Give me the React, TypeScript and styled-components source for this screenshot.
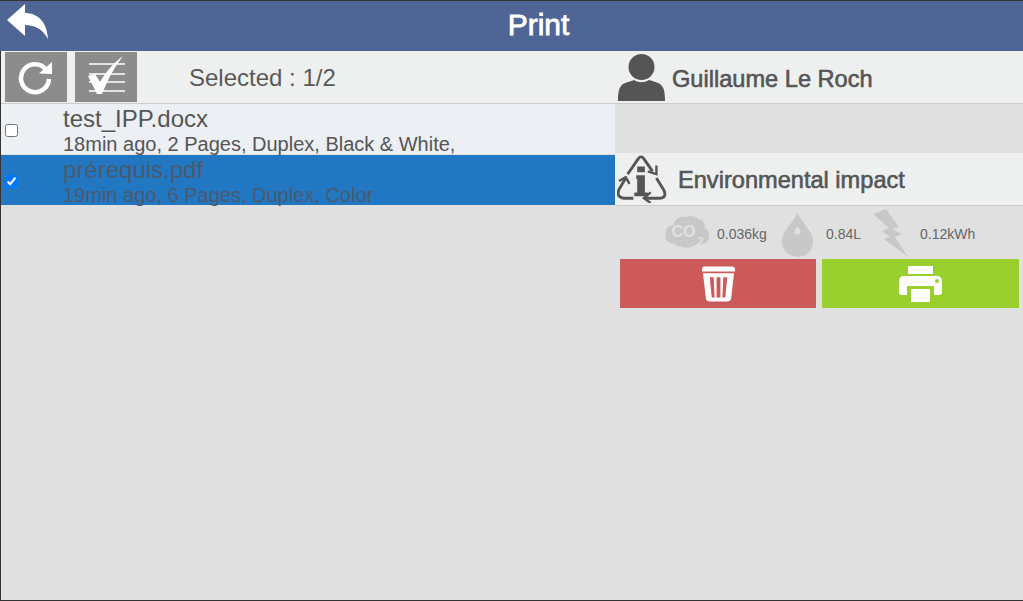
import React from "react";
import styled, { createGlobalStyle } from "styled-components";

const Global = createGlobalStyle`
  html, body { margin: 0; padding: 0; background: #e0e0e0; }
  body { font-family: "Liberation Sans", Arial, sans-serif; color: #555; }
`;

const Screen = styled.div`
  width: 1023px;
  height: 601px;
  box-sizing: border-box;
  display: flex;
  flex-direction: column;
  background: #e0e0e0;
  border-top: 1px solid #333;
  border-bottom: 1px solid #333;
  overflow: hidden;
`;

const Header = styled.header`
  height: 50px;
  flex: none;
  display: flex;
  align-items: center;
  justify-content: center;
  background: #4f6595;
  position: relative;
`;

const Title = styled.h1`
  margin: 0;
  font-size: 30px;
  font-weight: 400;
  color: #fff;
  -webkit-text-stroke: 0.8px #fff;
  position: relative;
  left: 27px;
  top: -1px;
`;

const BackButton = styled.button`
  position: absolute;
  left: 7px;
  top: 3px;
  width: 41px;
  height: 36px;
  padding: 0;
  border: 0;
  background: none;
`;

const Main = styled.main`
  flex: 1;
  display: grid;
  grid-template-columns: 614px 1fr;
  border-left: 1px solid #333;
  min-height: 0;
`;

const LeftColumn = styled.section`
  display: flex;
  flex-direction: column;
`;

const Toolbar = styled.div`
  height: 53px;
  box-sizing: border-box;
  display: flex;
  align-items: center;
  padding: 0 0 1px 4px;
  background: #eef0f0;
  border-bottom: 1px solid #ccc;
`;

const ToolButton = styled.button`
  width: 62px;
  height: 50px;
  padding: 0;
  border: 0;
  background: #8c8c8c;
  margin-right: 8px;
  display: flex;
  align-items: center;
  justify-content: center;
`;

const SelectedCount = styled.span`
  margin-left: 44px;
  font-size: 24px;
  color: #595959;
  position: relative;
  top: 1px;
`;

const Row = styled.div<{ $selected?: boolean }>`
  height: 50px;
  margin-bottom: 1px;
  flex: none;
  display: flex;
  align-items: center;
  background: ${(p) => (p.$selected ? "#2277c2" : "#eceff3")};
  color: ${(p) => (p.$selected ? "#4a5a6e" : "#555")};
`;

const Check = styled.input`
  width: 13px;
  height: 13px;
  margin: 2px 0 0 4px;
  flex: none;
`;

const RowText = styled.div`
  margin-left: 45px;
  padding-top: 2px;
  display: flex;
  flex-direction: column;
`;

const FileName = styled.div`
  font-size: 24px;
  line-height: 27px;
`;

const FileMeta = styled.div`
  font-size: 20px;
  line-height: 23px;
  margin-top: 1px;
`;

const RightColumn = styled.aside`
  display: flex;
  flex-direction: column;
`;

const InfoBar = styled.div<{ $gap: number; $pad: number }>`
  height: 53px;
  box-sizing: border-box;
  display: flex;
  align-items: center;
  padding-left: ${(p) => p.$pad}px;
  gap: ${(p) => p.$gap}px;
  background: #eef0f0;
  border-bottom: 1px solid #ccc;
  flex: none;
`;

const InfoLabel = styled.span<{ $top: number }>`
  font-size: 23.6px;
  font-weight: 400;
  color: #555;
  -webkit-text-stroke: 0.6px #555;
  position: relative;
  top: ${(p) => p.$top}px;
`;

const Spacer = styled.div`
  height: 49px;
  flex: none;
`;

const Metrics = styled.div`
  height: 53px;
  flex: none;
  display: flex;
  align-items: center;
  padding-left: 49px;
  font-size: 14px;
  color: #666;
`;

const Metric = styled.span<{ $left: number; $width: number }>`
  margin-left: ${(p) => p.$left}px;
  width: ${(p) => p.$width}px;
  white-space: nowrap;
  position: relative;
  top: 1px;
`;

const Actions = styled.div`
  display: grid;
  grid-template-columns: 196px 197px;
  gap: 6px;
  padding-left: 5px;
`;

const ActionButton = styled.button<{ $color: string }>`
  height: 49px;
  padding: 0;
  border: 0;
  background: ${(p) => p.$color};
  display: flex;
  align-items: center;
  justify-content: center;
`;

const App: React.FC = () => (
  <>
    <Global />
    <Screen>
      <Header>
        <BackButton aria-label="Back">
          <svg width="41" height="36" viewBox="0 0 41 36">
            <path fill="#fff" d="M0 16 18 0v9c12 0 22 8 23 26-5-9-12-14-23-14v11z" />
          </svg>
        </BackButton>
        <Title>Print</Title>
      </Header>
      <Main>
        <LeftColumn>
          <Toolbar>
            <ToolButton aria-label="Refresh">
              <svg width="36" height="36" viewBox="0 0 36 36" fill="none">
                <path d="M28 10.500A14 14 0 1 0 31 20" stroke="#fff" strokeWidth="4.500" />
                <path d="M21 14.500 34 15V3z" fill="#fff" />
              </svg>
            </ToolButton>
            <ToolButton aria-label="Select all">
              <svg width="42" height="44" viewBox="0 0 42 44" fill="none">
                <path d="M4 9h36M4 19h36M4 27h36M4 36h36" stroke="#fff" strokeWidth="1.500" />
                <path d="M3 21l7-2 5 8C22 15 30 7 38 1 30 11 23 24 17 39h-5z" fill="#fff" />
              </svg>
            </ToolButton>
            <SelectedCount>Selected : 1/2</SelectedCount>
          </Toolbar>
          <Row>
            <Check type="checkbox" readOnly />
            <RowText>
              <FileName>test_IPP.docx</FileName>
              <FileMeta>18min ago, 2 Pages, Duplex, Black &amp; White,</FileMeta>
            </RowText>
          </Row>
          <Row $selected>
            <Check type="checkbox" defaultChecked />
            <RowText>
              <FileName>prérequis.pdf</FileName>
              <FileMeta>19min ago, 6 Pages, Duplex, Color</FileMeta>
            </RowText>
          </Row>
        </LeftColumn>
        <RightColumn>
          <InfoBar $gap={7} $pad={3}>
            <svg width="47" height="48" viewBox="0 0 47 48">
              <circle cx="23.500" cy="14" r="13" fill="#555" />
              <path fill="#555" d="M0 48c0-9 1-14 5-17 4-2 9-3 11-4 5 3 10 3 15 0 3 1 8 2 11 4 4 3 5 8 5 17z" />
            </svg>
            <InfoLabel $top={2}>Guillaume Le Roch</InfoLabel>
          </InfoBar>
          <Spacer />
          <InfoBar $gap={11} $pad={2}>
            <svg width="50" height="48" viewBox="0 0 52 50" fill="none" stroke="#555" strokeWidth="3">
              <path d="M11 20 22 4q3-4 6 0l9 13" />
              <path d="M32 17l9 3v-9" strokeWidth="2.500" />
              <path d="M9 24 2 36q-3 8 5 9h10" />
              <path d="M2 27l7-4 4 7" strokeWidth="2.500" />
              <path d="M41 24l8 13q3 8-5 8H30" />
              <path d="M35 39l-7 6 7 5" strokeWidth="2.500" />
              <path d="M21 12h8v6h-8zM20 21h9v18h3v4H18v-4h3V25h-1z" fill="#555" stroke="none" />
            </svg>
            <InfoLabel $top={1}>Environmental impact</InfoLabel>
          </InfoBar>
          <Metrics>
            <svg width="47" height="35" viewBox="0 4 46 35" style={{ flex: "none", marginTop: -2 }}>
              <path fill="#c8c8c8" d="M10 34C2 33 0 28 1 23c0-4 3-8 8-8 1-6 7-10 13-8 4-2 9-1 12 2 5 1 7 5 6 9 5 2 6 9 3 13-3 3-7 4-11 3-4 4-12 5-16 2-2 1-4 0-6-2z" />
              <text x="7" y="27" fontSize="16" fontWeight="700" fill="#e0e0e0" fontFamily="Liberation Sans">CO</text>
              <text x="33" y="35" fontSize="11" fontWeight="700" fill="#e0e0e0" fontFamily="Liberation Sans">2</text>
            </svg>
            <Metric $left={6} $width={64}>0.036kg</Metric>
            <svg width="33" height="45" viewBox="0 0 32 46" style={{ flex: "none", marginTop: 3 }}>
              <path fillRule="evenodd" fill="#c8c8c8" d="M16 0c2 9 16 19 16 30a16 16 0 0 1-32 0C0 19 14 9 16 0zm0 15c-2 2-3 3-3 5a3 3 0 0 0 6 0c0-2-1-3-3-5z" />
            </svg>
            <Metric $left={12} $width={47}>0.84L</Metric>
            <svg width="36" height="48" viewBox="0 0 36 48" style={{ flex: "none" }}>
              <path fill="#c8c8c8" d="M0 5 13 0l13 18-7 2 10 5-7 3 13 20L11 30l6-2L9 22l7-3z" />
            </svg>
            <Metric $left={11} $width={60}>0.12kWh</Metric>
          </Metrics>
          <Actions>
            <ActionButton $color="#cd5a5a" aria-label="Delete">
              <svg width="33" height="36" viewBox="0 0 34 36">
                <path fill="#fff" fillRule="evenodd" d="M3 0h28c2 0 3 1 3 3v2H0V3c0-2 1-3 3-3zM1 7h32l-3 26c0 2-2 3-4 3H8c-2 0-4-1-4-3zm7 4 2 21h3l-1-21zm7 0v21h4V11zm7 0-1 21h3l2-21z" />
              </svg>
            </ActionButton>
            <ActionButton $color="#9ad02e" aria-label="Print">
              <svg width="43" height="36" viewBox="0 0 43 36">
                <path fill="#fff" fillRule="evenodd" d="M9 0h25v8H9zM5 10h33c3 0 5 2 5 5v11c0 2-1 3-3 3h-5v-9H8v9H3c-2 0-3-1-3-3V15c0-3 2-5 5-5zm33 3a2 2 0 1 0 0 4 2 2 0 0 0 0-4zM12 23h19v13H12z" />
              </svg>
            </ActionButton>
          </Actions>
        </RightColumn>
      </Main>
    </Screen>
  </>
);

export default App;
